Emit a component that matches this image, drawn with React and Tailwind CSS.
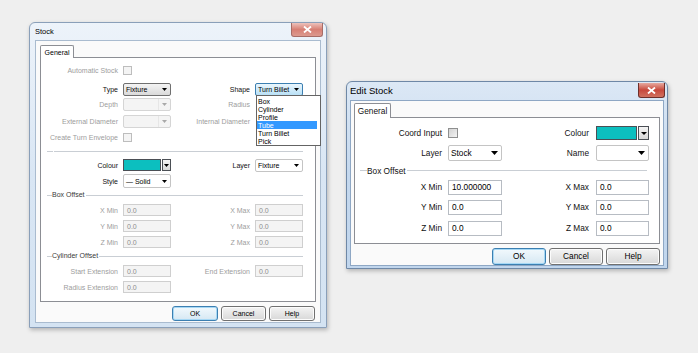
import React from 'react';

const font = "font-['Liberation_Sans',Arial,sans-serif]";

function Arrow({ w = 7, h = 4, c = '#000' }) {
  return (
    <svg width={w} height={h} viewBox={`0 0 ${w} ${h}`}>
      <path d={`M0 0h${w}L${w / 2} ${h}z`} fill={c} />
    </svg>
  );
}

function CloseBtn({ className = '', active }) {
  return (
    <div
      className={`flex items-center justify-center rounded-b-[3px] border border-t-0 ${
        active
          ? 'border-[#6d2f2a] bg-gradient-to-b from-[#e5a89f] via-[#c7473c] to-[#d0705f]'
          : 'border-[#a76d67] bg-gradient-to-b from-[#ecc2bc] via-[#d77f74] to-[#dc9a8f]'
      } ${className}`}
    >
      <svg width="9" height="7" viewBox="0 0 9 7">
        <path d="M1 0.5l7 6M8 0.5l-7 6" stroke="#fff" strokeWidth="1.8" />
      </svg>
    </div>
  );
}

const comboStyles = {
  plain: 'border-[#707070] bg-gradient-to-b from-[#f4f4f4] to-[#dadada] text-black',
  focus: 'border-[#3c7fb1] bg-gradient-to-b from-[#eaf6fd] to-[#b8e0f6] text-black',
  white: 'border-[#c4c4c4] bg-white text-black',
  off: 'border-[#d5d5d5] bg-[#f4f4f4] text-[#8d8d8d]',
};

function Combo({ value, kind = 'plain', className = '', aw = 5, ah = 3 }) {
  return (
    <div className={`flex items-center justify-between border rounded-[2px] ${comboStyles[kind]} ${className}`}>
      <span className="pl-[2px] leading-none whitespace-nowrap">{value}</span>
      <span className={`flex h-full items-center pr-[3px] ${kind === 'off' ? 'pl-[3px] border-l border-[#e6e6e6]' : ''}`}>
        <Arrow w={aw} h={ah} c={kind === 'off' ? '#a9a9a9' : '#000'} />
      </span>
    </div>
  );
}

function Check({ off, className = '' }) {
  return (
    <div
      className={`border ${
        off ? 'border-[#bdbdbd] bg-[#f4f4f4]' : 'border-[#8e8f8f] bg-gradient-to-br from-[#d2d2d2] to-[#f4f4f4]'
      } ${className}`}
    />
  );
}

function ColourBox({ className = '', btn = 'w-[9px]', aw = 5, ah = 3 }) {
  return (
    <div className={`flex gap-px ${className}`}>
      <div className="flex-1 border border-[#4b4f55] bg-[#0cbfbf]" />
      <div className={`${btn} flex items-center justify-center border border-[#4b4f55] bg-gradient-to-b from-[#f4f4f4] to-[#d8d8d8]`}>
        <Arrow w={aw} h={ah} />
      </div>
    </div>
  );
}

function Field({ value, off, className = '' }) {
  return (
    <div
      className={`flex items-center border ${
        off ? 'border-[#cfcfcf] bg-[#f4f4f4] text-[#8c8c8c]' : 'border-[#b7bcc3] bg-white text-black'
      } ${className}`}
    >
      <span className="pl-[3px] leading-none">{value}</span>
    </div>
  );
}

function Btn({ label, def, className = '' }) {
  return (
    <div
      className={`flex items-center justify-center rounded-[3px] border ${
        def
          ? 'border-[#3c7fb1] bg-gradient-to-b from-[#f2f9fd] to-[#d6e8f3] shadow-[inset_0_0_0_1px_#a6d8f5]'
          : 'border-[#707070] bg-gradient-to-b from-[#f4f4f4] to-[#d8d8d8] shadow-[inset_0_0_0_1px_#fcfcfc]'
      } ${className}`}
    >
      {label}
    </div>
  );
}

/* ---------- left "Stock" dialog ---------- */

function LRow({ className = '', l1, off1, c1, l2, off2, c2 }) {
  return (
    <div className={`flex h-4 items-center ${className}`}>
      <div className={`w-[77px] text-right whitespace-nowrap ${off1 ? 'text-[#9d9d9d]' : 'text-[#111]'}`}>{l1}</div>
      <div className="ml-[5px] flex w-[48px]">{c1}</div>
      <div className={`w-[79px] text-right whitespace-nowrap ${off2 ? 'text-[#9d9d9d]' : 'text-[#111]'}`}>{l2}</div>
      <div className="ml-[5px] flex w-[48px]">{c2}</div>
    </div>
  );
}

function LGroup({ label, className = '' }) {
  return (
    <div className={`relative ml-[6px] mr-[12px] border-t border-[#c9ced4] ${className}`}>
      {label && (
        <span className="absolute -top-[5px] left-[5px] bg-white pr-px leading-none text-[#3a3a3a]">{label}</span>
      )}
    </div>
  );
}

function ShapeList() {
  const items = ['Box', 'Cylinder', 'Profile', 'Tube', 'Turn Billet', 'Pick'];
  return (
    <div className="absolute left-[215px] top-[37px] z-20 flex h-[51px] w-[65px] flex-col border border-[#646464] bg-white pt-px">
      {items.map((it) => (
        <div
          key={it}
          className={`mr-[3px] flex h-[8px] items-center pl-px leading-none ${
            it === 'Tube' ? 'bg-[#3399ff] text-white' : 'text-black'
          }`}
        >
          {it}
        </div>
      ))}
    </div>
  );
}

function StockDialog() {
  const off = <Field value="0.0" off className="h-[12px] w-[48px]" />;
  return (
    <div className="absolute left-[29px] top-[22px] flex h-[306px] w-[298px] flex-col rounded-t-[6px] border border-[#8a9fb9] bg-gradient-to-b from-[#edf3fa] via-[#d9e6f4] to-[#d4e3f2] shadow-[1px_2px_4px_rgba(0,0,0,0.25)]">
      <div className="flex h-[17px] items-start justify-between">
        <span className="pl-[5px] pt-[5px] text-[7.5px] leading-none text-black">Stock</span>
        <CloseBtn className="mr-[3px] h-[14px] w-[32px]" />
      </div>
      <div className="mx-[5px] mb-[4px] flex flex-1 flex-col border border-[#a9bbcf] bg-[#fafafa] px-[4px] pt-[4px] text-[7px] leading-none">
        <div className="flex">
          <div className="relative z-10 -mb-px flex h-[13px] w-[34px] items-center justify-center rounded-t-[2px] border border-b-0 border-[#8c8e94] bg-white text-black">
            General
          </div>
        </div>
        <div className="relative flex h-[245px] flex-col border border-[#8c8e94] bg-white">
          <LRow className="mt-[4px]" l1="Automatic Stock" off1 c1={<Check off className="h-[9px] w-[9px]" />} />
          <LRow
            className="mt-[3px]"
            l1="Type"
            c1={<Combo value="Fixture" className="h-[13px] w-[48px]" />}
            l2="Shape"
            c2={<Combo value="Turn Billet" kind="focus" className="h-[13px] w-[48px]" />}
          />
          <LRow className="-mt-px" l1="Depth" off1 c1={<Combo value="" kind="off" className="h-[13px] w-[48px]" />} l2="Radius" off2 />
          <LRow
            className="mt-px"
            l1="External Diameter"
            off1
            c1={<Combo value="" kind="off" className="h-[13px] w-[48px]" />}
            l2="Internal Diameter"
            off2
          />
          <LRow l1="Create Turn Envelope" off1 c1={<Check off className="h-[9px] w-[9px]" />} />
          <div className="ml-[6px] mr-[12px] mt-[6px] flex gap-px">
            <div className="h-px w-[6px] bg-[#c9ced4]" />
            <div className="h-px flex-1 bg-[#c9ced4]" />
          </div>
          <LRow
            className="mt-[5px]"
            l1="Colour"
            c1={<ColourBox className="h-[12px] w-[48px]" />}
            l2="Layer"
            c2={<Combo value="Fixture" kind="white" className="h-[13px] w-[48px]" />}
          />
          <LRow l1="Style" c1={<Combo value="— Solid" kind="white" className="h-[14px] w-[48px]" />} />
          <LGroup label="Box Offset" className="mt-[6px]" />
          <LRow className="mt-[6px]" l1="X Min" off1 c1={off} l2="X Max" off2 c2={off} />
          <LRow l1="Y Min" off1 c1={off} l2="Y Max" off2 c2={off} />
          <LRow l1="Z Min" off1 c1={off} l2="Z Max" off2 c2={off} />
          <LGroup label="Cylinder Offset" className="mt-[6px]" />
          <LRow className="mt-[6px]" l1="Start Extension" off1 c1={off} l2="End Extension" off2 c2={off} />
          <LRow l1="Radius Extension" off1 c1={off} />
          <ShapeList />
        </div>
        <div className="mt-[4px] flex justify-end gap-[3px] pr-px text-black">
          <Btn label="OK" def className="h-[15px] w-[46px]" />
          <Btn label="Cancel" className="h-[15px] w-[45px]" />
          <Btn label="Help" className="h-[15px] w-[46px]" />
        </div>
      </div>
    </div>
  );
}

/* ---------- right "Edit Stock" dialog ---------- */

function RRow({ className = '', l1, c1, l2, c2 }) {
  return (
    <div className={`flex h-[18px] items-center ${className}`}>
      <div className="w-[87px] text-right whitespace-nowrap">{l1}</div>
      <div className="ml-[6px] flex w-[54px]">{c1}</div>
      <div className="w-[87px] text-right whitespace-nowrap">{l2}</div>
      <div className="ml-[7px] flex w-[53px]">{c2}</div>
    </div>
  );
}

function EditStockDialog() {
  const fld = (v) => <Field value={v} className="h-[15px] w-[54px]" />;
  return (
    <div className="absolute left-[346px] top-[81px] flex h-[188px] w-[322px] flex-col rounded-t-[6px] border border-[#6f88a6] bg-gradient-to-b from-[#dce8f5] via-[#c4d8ee] to-[#c1d6ed] shadow-[1px_2px_4px_rgba(0,0,0,0.25)]">
      <div className="flex h-[18px] items-start justify-between">
        <span className="pl-[3px] pt-[4px] text-[9.5px] leading-none text-black">Edit Stock</span>
        <CloseBtn active className="mr-[2px] mt-px h-[15px] w-[27px]" />
      </div>
      <div className="mx-[3px] mb-[2px] flex flex-1 flex-col border border-[#8ea7c4] bg-[#fafafa] px-[3px] pt-[2px] text-[8.3px] leading-none text-[#111]">
        <div className="flex">
          <div className="relative z-10 -mb-px flex h-[15px] w-[37px] items-center justify-center rounded-t-[2px] border border-b-0 border-[#8c8e94] bg-white">
            General
          </div>
        </div>
        <div className="flex h-[127px] flex-col border border-[#8c8e94] bg-white">
          <RRow
            className="mt-[6px]"
            l1="Coord Input"
            c1={<Check className="h-[10px] w-[10px]" />}
            l2="Colour"
            c2={<ColourBox className="h-[14px] w-[53px]" btn="w-[11px]" aw={6} ah={3} />}
          />
          <RRow
            className="mt-[2px]"
            l1="Layer"
            c1={<Combo value="Stock" kind="white" className="h-[16px] w-[54px]" aw={7} ah={4} />}
            l2="Name"
            c2={<Combo value="" kind="white" className="h-[16px] w-[53px]" aw={7} ah={4} />}
          />
          <div className="relative ml-[5px] mr-[12px] mt-[8px] border-t border-[#c9ced4]">
            <span className="absolute -top-[4px] left-[7px] bg-white pr-px leading-none">Box Offset</span>
          </div>
          <RRow className="mt-[7px]" l1="X Min" c1={fld('10.000000')} l2="X Max" c2={fld('0.0')} />
          <RRow className="mt-[2px]" l1="Y Min" c1={fld('0.0')} l2="Y Max" c2={fld('0.0')} />
          <RRow className="mt-[3px]" l1="Z Min" c1={fld('0.0')} l2="Z Max" c2={fld('0.0')} />
        </div>
        <div className="mt-[4px] flex justify-end gap-[3px] text-black">
          <Btn label="OK" def className="h-[17px] w-[54px]" />
          <Btn label="Cancel" className="h-[17px] w-[54px]" />
          <Btn label="Help" className="h-[17px] w-[54px]" />
        </div>
      </div>
    </div>
  );
}

export default function App() {
  return (
    <div className={`relative h-[353px] w-[698px] overflow-hidden bg-[#efefef] ${font}`}>
      <StockDialog />
      <EditStockDialog />
    </div>
  );
}
